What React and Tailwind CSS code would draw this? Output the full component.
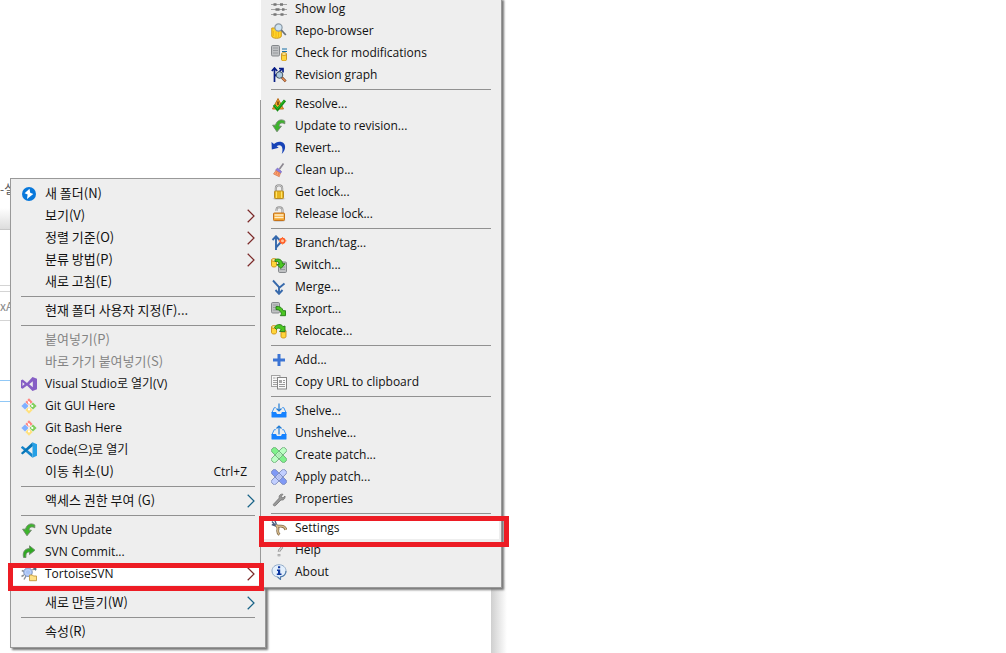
import React from 'react';

const Svg = ({ children }) => (
  <svg viewBox="0 0 16 16" className="h-4 w-4" aria-hidden="true">{children}</svg>
);

const Db = ({ x = 0, y = 0, gray = false }) => (
  <g transform={`translate(${x} ${y})`}>
    {gray ? (
      <>
        <rect x=".5" y=".5" width="8" height="10.500" rx="1.200" fill="#bfc1c3" stroke="#85888b" />
        <path d="M2 3h5M2 5.500h5M2 8h5" stroke="#989b9e" />
      </>
    ) : (
      <>
        <path d="M.5 2v5.500c0 2 5 2 5 0V2z" fill="#ffd53a" stroke="#c98f16" strokeWidth=".9" />
        <ellipse cx="3" cy="2" rx="2.500" ry="1.400" fill="#fff0a0" stroke="#c98f16" strokeWidth=".9" />
      </>
    )}
  </g>
);

const Git = () => (
  <Svg>
    <path d="M8 .3 11.600 3.900 8 7.500 4.400 3.900z" fill="#ff8580" />
    <path d="M12 4.400 15.600 8 12 11.600 8.400 8z" fill="#80cf5a" />
    <path d="M8 8.500 11.600 12.100 8 15.700 4.400 12.100z" fill="#ffe17c" />
    <path d="M4 4.400 7.600 8 4 11.600 .4 8z" fill="#80b0ff" />
    <path d="M6 2.200 8 4.300v7.500M8 4.500 11.500 8" fill="none" stroke="#fff" strokeWidth="1" />
    <circle cx="8" cy="4.500" r="1.100" fill="#fff" /><circle cx="11.300" cy="8" r="1.100" fill="#fff" /><circle cx="8" cy="11.500" r="1.100" fill="#fff" />
  </Svg>
);

const Lock = ({ open }) => (
  <Svg>
    <ellipse cx="8" cy="14.800" rx="6.500" ry=".9" fill="#c8c8c8" />
    <path d={open ? 'M5.500 5V3.500c.3-3 5.800-3 6 .3V8' : 'M4.800 8V4.200c0-4 6.400-4 6.400 0V8'} fill="none" stroke="#8e8e8e" strokeWidth="2" />
    <path d={open ? 'M5.500 5V3.500c.3-3 5.800-3 6 .3V8' : 'M4.800 8V4.200c0-4 6.400-4 6.400 0V8'} fill="none" stroke="#d9d9d9" strokeWidth=".8" />
    <rect x={open ? 2.500 : 3.500} y="7" width={open ? 11 : 9} height="7.500" rx=".8" fill={open ? '#f4a631' : '#e7b51f'} stroke={open ? '#c5731a' : '#b58b28'} />
    {open ? <path d="M3.500 9h9M3.500 11.500h9" stroke="#fff0ca" strokeWidth="1.300" /> : <path d="M5.500 7.500v6.500M10.500 7.500v6.500" stroke="#ffe36c" />}
  </Svg>
);

const Patch = ({ blue }) => {
  const a = blue ? '#c2cfff' : '#bcffc4';
  const b = blue ? '#7f99f5' : '#7ff28b';
  const s = blue ? '#7886b8' : '#69a874';
  return (
    <Svg>
      <rect x="-1.200" y="5.200" width="18.400" height="5.600" rx="2" transform="rotate(-45 8 8)" fill={a} stroke={s} strokeWidth=".8" />
      <rect x="-1.200" y="5.200" width="18.400" height="5.600" rx="2" transform="rotate(45 8 8)" fill={b} stroke={s} strokeWidth=".8" />
      <path d="m8 4 4 4-4 4-4-4z" fill={a} stroke={s} strokeWidth=".8" />
      <path d="M8 5.800v.8M6 7.600v.8M8 7.600v.8M10 7.600v.8M8 9.500v.8" stroke={s} strokeWidth=".9" />
    </Svg>
  );
};

const Tray = ({ up }) => (
  <Svg>
    <path d="M4.800 4.700H3.200L1 9.500M11.200 4.700h1.600L15 9.500" fill="none" stroke="#3c93ef" />
    <path d="M.5 9H5l1 2h4l1-2h4.500v4.700c0 .6-.4.900-.9.900H1.400c-.5 0-.9-.3-.9-.9z" fill="#1682ff" />
    <path d={up ? 'M8 9.500V1M5.500 3.500 8 1l2.500 2.500' : 'M8 .5V8M5.500 5.500 8 8l2.500-2.500'} fill="none" stroke="#207bd4" strokeWidth="1.200" />
  </Svg>
);

const icons = {
  folder: <Svg><circle cx="8" cy="8" r="7" fill="#0878db" /><path d="M8.500 2.800 3.600 7.300l3 1.100-.6 4.500 6.300-5-3.100-1.200z" fill="#fff" /></Svg>,
  vs: <Svg><path d="M0 4.300 1.700 3.500 6 7 11.500 1 16 2.700v10.600L11.500 15 6 9.500l-4.300 3.300L0 12zm1.500 2v3.800L3.700 8zM8.200 8.200l3.600 3V5.200z" fill="#865fc5" fillRule="evenodd" /></Svg>,
  git: <Git />,
  code: <Svg><path d="m0 5.300 1.600-1.200L11.500 12v3.700L.2 5.900z" fill="#1685cb" /><path d="M0 11 11.500.3 12 4 1.600 12.500 0 11.300z" fill="#0877b9" /><path d="M11.500.3 16 2.200v11.600l-4.500 1.900z" fill="#26a0e6" /></Svg>,
  update: <Svg><path d="M13.800 5.800V3C11 .9 6 1.500 4.500 7.200H1.600L6 13.800 10.400 8.200H8C8.200 5.200 10.500 4 13.800 5.800z" fill="#3db52c" stroke="#70856d" strokeWidth=".9" /></Svg>,
  commit: <Svg><path d="M8.500 1.800 14 6.200 8.500 10.600V8C5.800 8 4.500 9.500 5 13.500H2.600C1.300 8.500 3.500 4.700 8.500 4.500z" fill="#2faa22" stroke="#6f8a6b" strokeWidth=".9" /></Svg>,
  tortoise: (
    <Svg>
      <path d="M3 5.500.8 4.500M3 9l-2.500 1.500M5 10l-2 3.500M11.500 4l2-1.800" stroke="#8c9196" strokeWidth="1.500" />
      <circle cx="7" cy="6.200" r="4.300" fill="#a9c4f5" stroke="#7f92b8" strokeWidth=".9" />
      <path d="M4.500 5 7 3.500 9.500 5v2.500L7 9 4.500 7.500z" fill="none" stroke="#c5d7fa" strokeWidth=".7" />
      <path d="m12.200 3 2.200-1.800L15.700 3l-1 1.800z" fill="#4c6984" />
      <path d="M8.500 9h3l.8 1h3.200v4.700h-7z" fill="#ffe288" stroke="#c29a3e" strokeWidth=".9" />
    </Svg>
  ),
  log: (
    <Svg>
      <path d="M0 3.500h16M0 8.500h16M0 13.500h16" stroke="#a3a3a3" />
      <path d="M2.500 3.500h3M9 3.500h3M4.500 8.500h4M11 8.500h2.500M2.500 13.500h3M9.500 13.500h3" stroke="#777" strokeWidth="2.500" />
    </Svg>
  ),
  repo: (
    <Svg>
      <path d="M.8 5v8c0 3 9.500 3 9.500 0V5z" fill="#ffd429" stroke="#cb971c" />
      <path d="M2.500 8v5M5 8.500v5.500M7.500 8.500V14" stroke="#f4b817" />
      <circle cx="7.500" cy="4.500" r="3.600" fill="#cfe3f2" stroke="#8a98a4" strokeWidth="1.200" />
      <path d="m10.300 7 4.500 5" stroke="#68717a" strokeWidth="1.800" />
    </Svg>
  ),
  check: <Svg><Db gray /><path d="M11 4h5M11 6.500h5" stroke="#176fa5" strokeWidth="1.200" /><Db x={10} y={7} /></Svg>,
  graph: (
    <Svg>
      <path d="M3.500 15V1M.8 4l2.700-3 2.700 3M4 9l7.500-7.500M8 1.500h4v4" fill="none" stroke="#071d86" strokeWidth="1.700" />
      <circle cx="8.500" cy="8" r="3.300" fill="#abc9df" stroke="#475765" />
      <path d="m11 10.600 3.700 3.700" stroke="#70452c" strokeWidth="2.600" /><path d="m11.300 11 3.200 3.200" stroke="#ed8e50" strokeWidth="1.300" />
    </Svg>
  ),
  resolve: (
    <Svg>
      <path d="M7 2.500 1.500 13h11z" fill="#f5a526" stroke="#bd7220" /><path d="M7 5.500v3.500" stroke="#633d0d" strokeWidth="1.500" />
      <path d="m3 9 3.500 4.500L14 4.300" fill="none" stroke="#178d15" strokeWidth="2.800" /><path d="m3.500 9.500 3 3L13.500 4.500" fill="none" stroke="#2ccb21" strokeWidth="1" />
    </Svg>
  ),
  revert: <Svg><path d="m.5 2 .3 7.500L7.700 7.700 5.600 6.200C9 3.700 13.300 6 10.700 14 16.500 8 14.300 1.500 8.500 1.700 6 1.700 4.300 2.800 3 4.100z" fill="#1743b7" /></Svg>,
  clean: (
    <Svg>
      <path d="m8.500 7 4-5.500" stroke="#8b8790" strokeWidth="1.700" />
      <path d="m6.500 6 4 3.500-.8 1.800-5.200-3z" fill="#8c7ce2" stroke="#7669b8" strokeWidth=".7" />
      <path d="M5 8.500 2.500 12l5.800 2.700 1-3.400z" fill="#ffa36a" stroke="#cf7650" strokeWidth=".7" /><path d="m6 9.500-1 3M8 10.500l-1 3" stroke="#df7550" strokeWidth=".8" />
    </Svg>
  ),
  lock: <Lock />,
  unlock: <Lock open />,
  branch: (
    <Svg>
      <path d="M5 15V2M1.500 5 5 1.300 8.500 5M5 12.500 10 7" fill="none" stroke="#3468ac" strokeWidth="1.900" />
      <circle cx="11.500" cy="5.800" r="2.300" fill="#ffc39a" stroke="#ff5b26" strokeWidth="1.600" />
      <path d="M11.500 2v1.500M11.500 8v1.500M7.700 5.800h1.500M14 5.800h1.500" stroke="#ff7b38" />
    </Svg>
  ),
  switch: <Svg><Db y={1} /><Db x={7} y={4.500} gray /><path d="M4 2.500c4-1.500 7.500.500 7.500 4.200H14L10 11.500 5.800 7.500h2.500C8.300 5 6.500 4 4 4.500z" fill="#4bc622" stroke="#257c16" strokeWidth=".9" /></Svg>,
  merge: <Svg><path d="M2 1.500 8 8v7M13.500 4.500 8 9M4.500 11 8 14.800 11.500 11" fill="none" stroke="#3769ab" strokeWidth="1.900" /></Svg>,
  export: <Svg><Db gray y={1} /><path d="M5 5.500c4-.5 6.500 1.500 7 4.200h2.500v5H9.300l1.200-1.800C9.500 9.500 8 8.500 5 8.500z" fill="#4bc622" stroke="#257c16" strokeWidth=".9" /></Svg>,
  relocate: <Svg><Db y={2} /><Db x={9.500} y={6} /><path d="M3.500 4.500c1.500-3.500 7-4 8.500-.8l2-.7v5.500H8.500L10 6.700C8.500 4.500 6.300 4.800 5.500 6.500z" fill="#4bc622" stroke="#257c16" strokeWidth=".9" /></Svg>,
  add: <Svg><path d="M6.500 2h3v4.500H14v3H9.500V14h-3V9.500H2v-3h4.500z" fill="#3b74d4" /></Svg>,
  copy: (
    <Svg>
      <rect x=".5" y="1.500" width="8.500" height="11" fill="#f8f8f8" stroke="#a3a3a3" /><path d="M2 4h2.500M5.500 4H8M2 6.500h4M2 8.500h4M2 10.500h4" stroke="#a3a3a3" />
      <rect x="6.500" y="3.500" width="9" height="11.500" fill="#fafafa" stroke="#858585" /><rect x="8" y="6" width="3" height="3" fill="#a5a5a5" /><path d="M12 6.500h2M12 8.500h2M8 10.500h6M8 12.500h6" stroke="#999" />
    </Svg>
  ),
  shelve: <Tray />,
  unshelve: <Tray up />,
  create: <Patch />,
  apply: <Patch blue />,
  props: <Svg><path d="M2.500 13.200 8.300 7C7.500 4.500 9.700 2.600 12 3.300L10.300 5.200l.3 1.300 1.500.3L14 5c.4 2.800-1.700 4.600-4 3.900L4.600 14.500c-1.300 1-2.800-.2-2.100-1.300z" fill="#999" stroke="#707070" strokeWidth=".8" /></Svg>,
  settings: (
    <Svg>
      <path d="M1 1.500 4.500 5.500M4 .8l1.500 4M.8 4.500 5 6" stroke="#4e5e80" strokeWidth="1.400" />
      <path d="M5 5c1 1.600 3 1.200 5 1.200 2.500.1 4.200 1.300 5 3.600M5.500 5.500c2.300 2.300 1.500 3 1.200 5.200-.1 2 .500 2.900 1.800 4" fill="none" stroke="#806b4c" strokeWidth="2.800" />
      <path d="M5 5c1 1.600 3 1.200 5 1.200 2.500.1 4.200 1.300 5 3.600M5.500 5.500c2.300 2.300 1.500 3 1.200 5.200-.1 2 .500 2.900 1.800 4" fill="none" stroke="#dec18f" strokeWidth="1.300" />
    </Svg>
  ),
  help: <Svg><path d="M5 5c0-4 6-4 6-.5 0 2.500-3 2.500-3 5.300M8 12v2.300" fill="none" stroke="#8b8b8b" strokeWidth="2.600" /><path d="M5 5c0-4 6-4 6-.5 0 2.500-3 2.500-3 5.300M8 12.300v1.700" fill="none" stroke="#d5d5d5" strokeWidth="1.200" /></Svg>,
  about: (
    <Svg>
      <path d="M8 .7c4.100 0 7 2.800 7 6.200 0 3.200-2.300 5.500-5.500 6v2.600l-3-2.600C3.300 12.600 1 10.300 1 6.900 1 3.500 3.900.7 8 .7z" fill="#e3effc" stroke="#91aac8" />
      <path d="M15 7c0 3.200-2.300 5.400-5.500 5.900v2.600l-3-2.600" fill="none" stroke="#507cab" strokeWidth="1.100" />
      <path d="M7 2.200h2.200v2H7zM6 5.500h3.200v4h1.300V11H5.800V9.500H7V7H6z" fill="#0b35a0" />
    </Svg>
  ),
};

const mainMenu = [
  ['새 폴더(N)', 'folder'],
  ['보기(V)', null, { arrow: 'red' }],
  ['정렬 기준(O)', null, { arrow: 'red' }],
  ['분류 방법(P)', null, { arrow: 'red' }],
  ['새로 고침(E)'],
  null,
  ['현재 폴더 사용자 지정(F)...'],
  null,
  ['붙여넣기(P)', null, { disabled: true }],
  ['바로 가기 붙여넣기(S)', null, { disabled: true }],
  ['Visual Studio로 열기(V)', 'vs', { latin: true }],
  ['Git GUI Here', 'git', { latin: true }],
  ['Git Bash Here', 'git', { latin: true }],
  ['Code(으)로 열기', 'code', { latin: true }],
  ['이동 취소(U)', null, { shortcut: 'Ctrl+Z' }],
  null,
  ['액세스 권한 부여 (G)', null, { arrow: 'blue' }],
  null,
  ['SVN Update', 'update', { latin: true }],
  ['SVN Commit...', 'commit', { latin: true }],
  ['TortoiseSVN', 'tortoise', { active: true, arrow: 'red', latin: true }],
  null,
  ['새로 만들기(W)', null, { arrow: 'blue' }],
  null,
  ['속성(R)'],
];

const svnMenu = [
  ['Show log', 'log'],
  ['Repo-browser', 'repo'],
  ['Check for modifications', 'check'],
  ['Revision graph', 'graph'],
  null,
  ['Resolve...', 'resolve'],
  ['Update to revision...', 'update'],
  ['Revert...', 'revert'],
  ['Clean up...', 'clean'],
  ['Get lock...', 'lock'],
  ['Release lock...', 'unlock'],
  null,
  ['Branch/tag...', 'branch'],
  ['Switch...', 'switch'],
  ['Merge...', 'merge'],
  ['Export...', 'export'],
  ['Relocate...', 'relocate'],
  null,
  ['Add...', 'add'],
  ['Copy URL to clipboard', 'copy'],
  null,
  ['Shelve...', 'shelve'],
  ['Unshelve...', 'unshelve'],
  ['Create patch...', 'create'],
  ['Apply patch...', 'apply'],
  ['Properties', 'props'],
  null,
  ['Settings', 'settings', { active: true }],
  ['Help', 'help'],
  ['About', 'about'],
];

function MenuItems({ items, latin }) {
  return items.map((item, i) => {
    if (!item) {
      return <li key={i} role="separator" className="mx-2.5 flex h-[7px] items-center"><span className="h-px w-full bg-[#919191]" /></li>;
    }
    const [label, icon, opts = {}] = item;
    const small = latin || opts.latin;
    return (
      <li key={i} role="none" className="px-0.5">
        <button
          type="button"
          role="menuitem"
          disabled={opts.disabled}
          className={`flex h-[22px] w-full items-center px-2 text-left whitespace-nowrap ${opts.active ? 'bg-white' : ''} ${opts.disabled ? 'text-[#838383]' : 'text-[#111]'}`}
        >
          <span className="mr-2 w-4 shrink-0">{icon ? icons[icon] : null}</span>
          <span className={`flex-1 ${small ? "font-['Open_Sans','Noto_Sans_CJK_KR',sans-serif] text-[12px]" : 'pb-0.5'}`}>{label}</span>
          {opts.shortcut ? <span className="pr-2 font-['Open_Sans',sans-serif] text-[12px]">{opts.shortcut}</span> : null}
          {opts.arrow ? (
            <svg viewBox="0 0 8 14" className={`h-3.5 w-2 ${opts.arrow === 'red' ? 'text-[#7b2928]' : 'text-[#176287]'}`} aria-hidden="true">
              <path d="M.7.8 7 7 .7 13.200" fill="none" stroke="currentColor" strokeWidth="1.200" />
            </svg>
          ) : null}
        </button>
      </li>
    );
  });
}

export default function App() {
  return (
    <main className="relative h-screen overflow-hidden bg-white font-['Noto_Sans_CJK_KR',sans-serif] text-[13px] leading-[22px]">
      <div className="flex w-[11px] flex-col text-[#555]" aria-hidden="true">
        <div className="flex h-52 items-end pb-2 text-[12px] whitespace-nowrap">-설</div>
        <div className="h-[22px] border-b border-[#c8c8c8] bg-linear-to-b from-white to-[#dddddd]" />
        <div className="h-14 border-b border-[#d4d4d4]" />
        <div className="mt-[5px] flex h-[30px] items-center border-y border-[#d4d4d4] text-[12px] whitespace-nowrap text-[#888]">xA</div>
        <div className="mt-[59px] h-[22px] border-y border-[#91c8f6]" />
      </div>
      <div className="absolute top-[580px] bottom-0 left-[491px] w-4 bg-linear-to-r from-[#cfcfcf] to-white" />

      <ul role="menu" aria-label="Folder" className="absolute top-[178px] left-2.5 w-64 border border-[#999] bg-[#eeeeee] py-1 shadow-[2px_2px_2px_#777]">
        <MenuItems items={mainMenu} />
      </ul>

      <ul role="menu" aria-label="TortoiseSVN" className="absolute -top-0.5 left-[260px] w-[242px] border border-t-0 border-[#999] bg-[#eeeeee] pb-1 shadow-[2px_2px_2px_#777]">
        <MenuItems items={svnMenu} latin />
      </ul>
      <div className="absolute top-0 left-[260px] h-[100px] w-px bg-white" />

      <div className="pointer-events-none absolute top-[563px] left-2 h-7 w-64 border-5 border-[#ed1c24]" />
      <div className="pointer-events-none absolute top-[516px] left-[259px] h-[31px] w-[250px] border-5 border-[#ed1c24]" />
    </main>
  );
}
